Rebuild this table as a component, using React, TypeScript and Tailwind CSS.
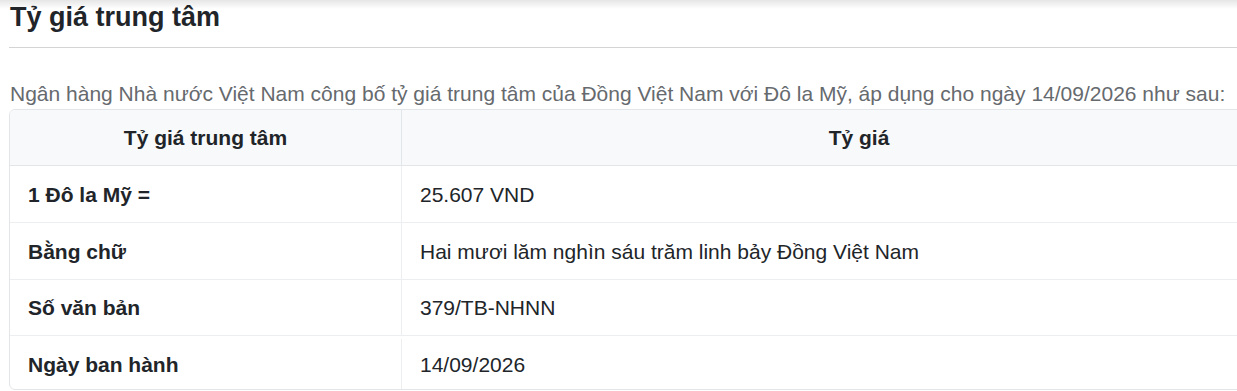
import React from "react";

const rows: { label: string; value: string; h: string }[] = [
  { label: "1 Đô la Mỹ =", value: "25.607 VND", h: "h-[57px]" },
  { label: "Bằng chữ", value: "Hai mươi lăm nghìn sáu trăm linh bảy Đồng Việt Nam", h: "h-[57px]" },
  { label: "Số văn bản", value: "379/TB-NHNN", h: "h-[56px]" },
  { label: "Ngày ban hành", value: "14/09/2026", h: "h-[53px] pt-[3px]" },
];

export default function App() {
  return (
    <div
      className="relative h-[391px] w-full overflow-hidden bg-white"
      style={{ fontFamily: '"Liberation Sans", Arial, sans-serif' }}
    >
      <div className="pointer-events-none absolute inset-x-0 top-0 h-[9px] bg-gradient-to-b from-black/10 to-transparent" />
      <div className="pl-[9px]">
        <h2 className="mt-[1px] border-b border-[#d4d4d4] pb-[14px] pl-[1px] text-[27px] font-bold leading-[32px] text-[#212529]">
          Tỷ giá trung tâm
        </h2>
        <p className="mt-[30px] pl-[1px] text-[21px] leading-[31px] whitespace-nowrap text-[#666a6e]">
          Ngân hàng Nhà nước Việt Nam công bố tỷ giá trung tâm của Đồng Việt Nam với Đô la Mỹ, áp dụng cho ngày 14/09/2026 như sau:
        </p>
        <div className="w-[1308px] overflow-hidden rounded-[6px] border border-[#e3e6e9] text-[21px] leading-[31px] text-[#212529]">
          <div className="grid h-[56px] grid-cols-[392px_1fr] border-b border-[#e3e6e9] bg-[#f8f9fa] font-bold">
            <div className="flex items-center justify-center border-r border-[#e3e6e9]">Tỷ giá trung tâm</div>
            <div className="flex items-center justify-center">Tỷ giá</div>
          </div>
          {rows.map((r, i) => (
            <div
              key={r.label}
              className={`grid grid-cols-[392px_1fr] ${r.h} ${i < rows.length - 1 ? "border-b border-[#eceef0]" : ""}`}
            >
              <div className="flex items-center border-r border-[#eceef0] px-[18px] font-bold">{r.label}</div>
              <div className="flex items-center px-[18px]">{r.value}</div>
            </div>
          ))}
        </div>
      </div>
    </div>
  );
}
